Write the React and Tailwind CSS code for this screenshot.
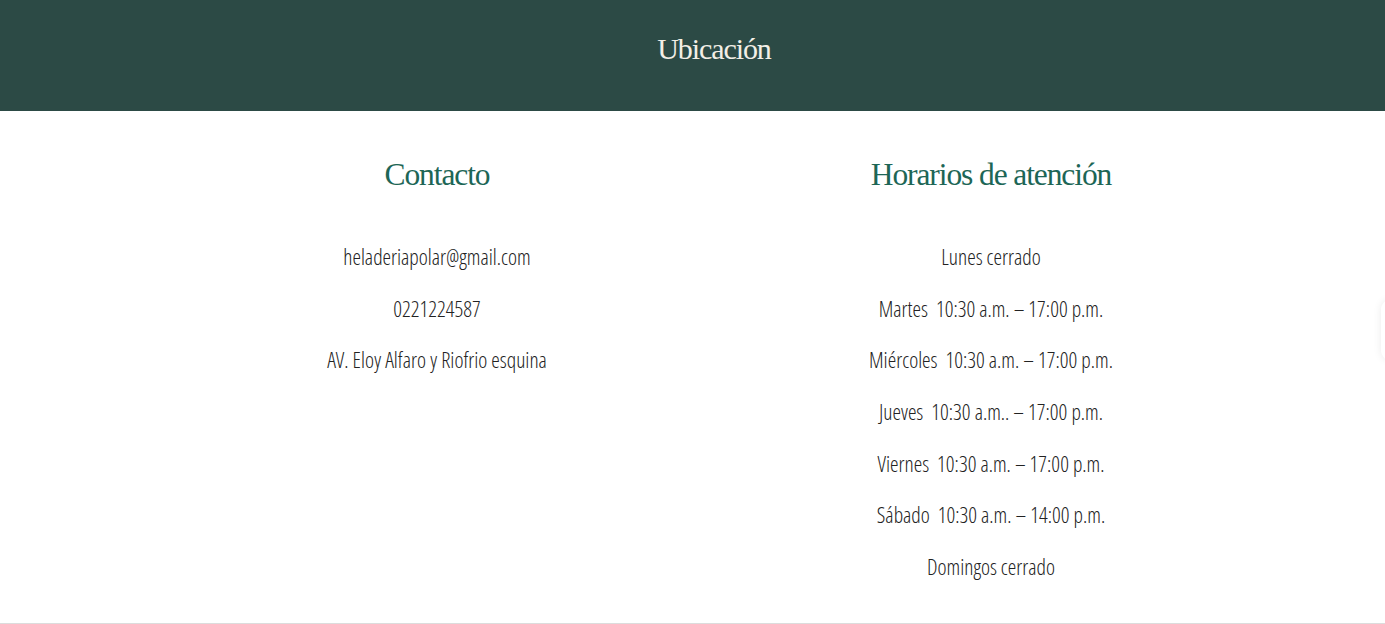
import React from 'react';

const contacto = ['heladeriapolar@gmail.com', '0221224587', 'AV. Eloy Alfaro y Riofrio esquina'];

const horarios = [
  'Lunes cerrado',
  'Martes  10:30 a.m. – 17:00 p.m.',
  'Miércoles  10:30 a.m. – 17:00 p.m.',
  'Jueves  10:30 a.m.. – 17:00 p.m.',
  'Viernes  10:30 a.m. – 17:00 p.m.',
  'Sábado  10:30 a.m. – 14:00 p.m.',
  'Domingos cerrado',
];

const serif = { fontFamily: '"Liberation Serif", "DejaVu Serif", serif' };

function Column({ title, items }) {
  return (
    <div className="flex flex-col items-center">
      <h2 className="text-[31.5px] leading-[40px] text-[#1d6656] mt-[155px] tracking-[-1.1px]" style={serif}>{title}</h2>
      <ul className="mt-[50px] flex flex-col items-center gap-[27.7px]">
        {items.map(t => (
          <li key={t} className="text-[21.5px] leading-[24px] font-light text-[#222] whitespace-pre font-stretch-condensed">{t}</li>
        ))}
      </ul>
    </div>
  );
}

export default function App() {
  return (
    <div className="w-[1385px] h-[624px] bg-white overflow-hidden relative font-['Open_Sans',sans-serif]">
      <header className="h-[111px] bg-[#2c4a45] flex items-center pl-[160px]">
        <h1 className="w-[1108px] text-center text-[30px] tracking-[-1.1px] text-[#f3efe6] -mt-[14px]" style={serif}>Ubicación</h1>
      </header>
      <div className="grid grid-cols-2 w-[1108px] ml-[160px] -mt-[111px]">
        <Column title="Contacto" items={contacto} />
        <Column title="Horarios de atención" items={horarios} />
      </div>
      <div className="absolute bottom-0 left-0 right-0 h-px bg-[#dcdcdc]" />
      <div className="absolute right-[-14px] top-[300px] w-[18px] h-[60px] rounded-full shadow-[0_0_8px_rgba(0,0,0,0.08)] bg-white" />
    </div>
  );
}
